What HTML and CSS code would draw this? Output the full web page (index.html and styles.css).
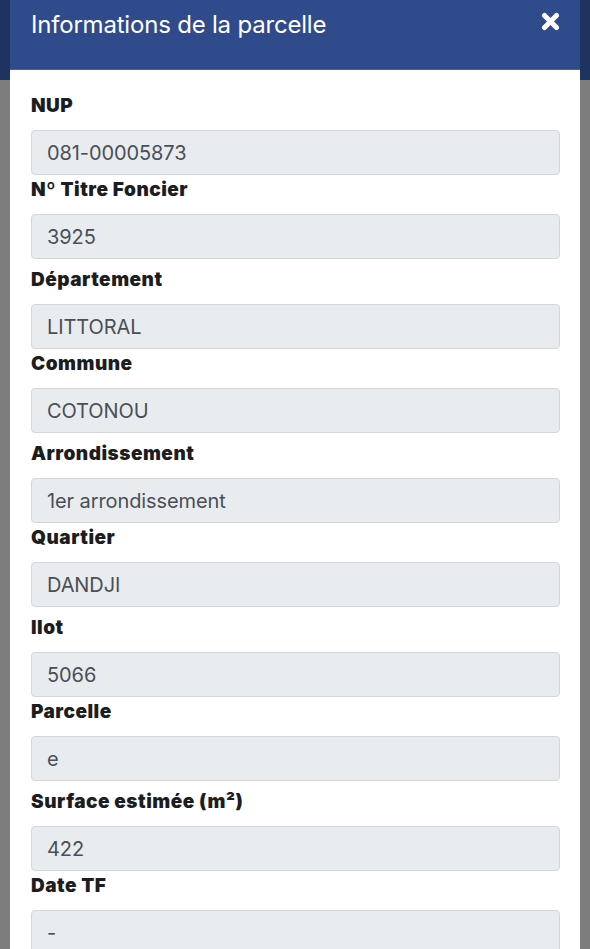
FILE: index.html
```html
<!DOCTYPE html>
<html lang="fr">
<head>
<meta charset="utf-8">
<title>Informations de la parcelle</title>
<link rel="stylesheet" href="styles.css">
</head>
<body>
<div class="modal">
  <div class="modal-header">
    <h1 class="modal-title">Informations de la parcelle</h1>
    <svg class="close" width="19" height="19" viewBox="0 0 19 19" aria-label="Fermer">
      <path d="M3.5 3.5 L15.5 15.5 M15.5 3.5 L3.5 15.5" stroke="#ffffff" stroke-width="5" stroke-linecap="round" fill="none"/>
    </svg>
  </div>
  <div class="modal-body">
    <div class="pair">
      <div class="field"><label class="label">NUP</label><div class="input">081-00005873</div></div>
      <div class="field"><label class="label">Nº Titre Foncier</label><div class="input">3925</div></div>
    </div>
    <div class="pair">
      <div class="field"><label class="label">Département</label><div class="input">LITTORAL</div></div>
      <div class="field"><label class="label">Commune</label><div class="input">COTONOU</div></div>
    </div>
    <div class="pair">
      <div class="field"><label class="label">Arrondissement</label><div class="input">1er arrondissement</div></div>
      <div class="field"><label class="label">Quartier</label><div class="input">DANDJI</div></div>
    </div>
    <div class="pair">
      <div class="field"><label class="label">Ilot</label><div class="input">5066</div></div>
      <div class="field"><label class="label">Parcelle</label><div class="input">e</div></div>
    </div>
    <div class="pair">
      <div class="field"><label class="label">Surface estimée (m²)</label><div class="input">422</div></div>
      <div class="field"><label class="label">Date TF</label><div class="input">-</div></div>
    </div>
  </div>
</div>
</body>
</html>
```
FILE: styles.css
```css
html, body {
  margin: 0;
  padding: 0;
  height: 949px;
  overflow: hidden;
}
body {
  background: linear-gradient(to bottom, #1e335f 0, #1e335f 80px, #7d7d7d 80px, #7d7d7d 100%);
  font-family: Inter, "Noto Sans", sans-serif;
}
.modal {
  margin: 0 10px;
  background: #ffffff;
  height: 949px;
}
.modal-header {
  background: #2f4b8b;
  border-bottom: 1px solid #4a66a6;
  display: flex;
  justify-content: space-between;
  align-items: flex-start;
  padding: 10px 20px 0 21px;
  box-sizing: border-box;
  height: 70px;
}
.modal-title {
  margin: 0;
  color: #ffffff;
  font-size: 24px;
  font-weight: 400;
  line-height: 29px;
  letter-spacing: -0.2px;
}
.close {
  display: block;
  margin-top: 2px;
}
.modal-body {
  padding: 21px 20px 0 21px;
  display: flex;
  flex-direction: column;
  gap: 6px;
}
.pair {
  display: flex;
  flex-direction: column;
  gap: 0;
}
.field {
  display: flex;
  flex-direction: column;
}
.label {
  font-size: 19px;
  font-weight: 900;
  line-height: 27px;
  padding-top: 1px;
  letter-spacing: 0.5px;
  color: #1b1d20;
  margin-bottom: 11px;
}
.input {
  height: 45px;
  box-sizing: border-box;
  background: #e9ecef;
  border: 1px solid #d3d7db;
  border-radius: 4px;
  padding: 0 15px;
  display: flex;
  align-items: center;
  font-size: 20px;
  letter-spacing: -0.1px;
  color: #4a4f55;
}
```
